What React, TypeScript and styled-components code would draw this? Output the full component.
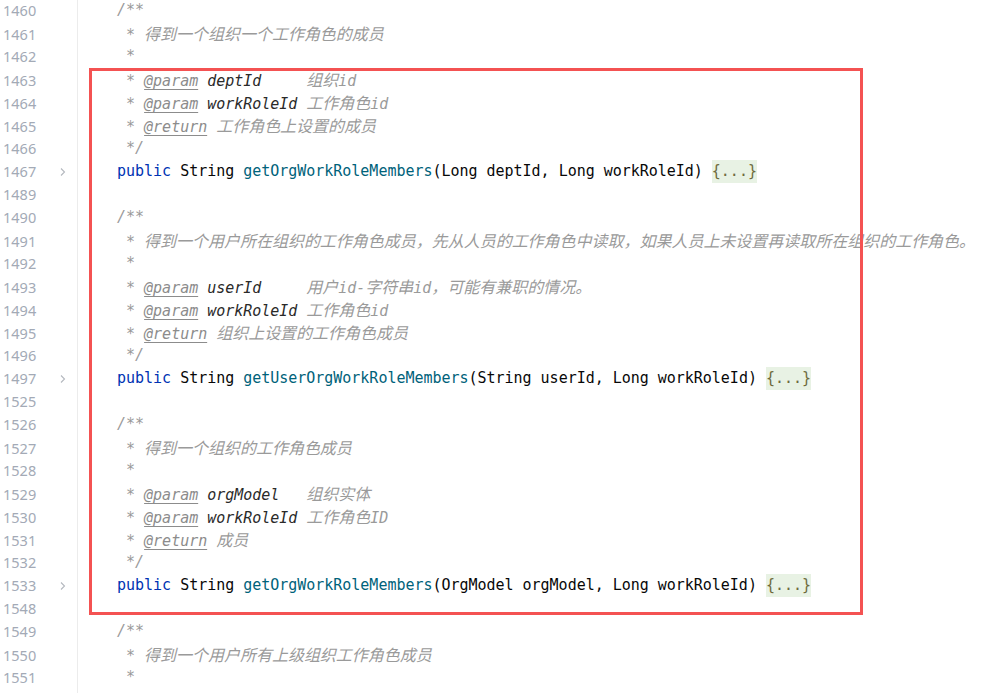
import React from "react";
import styled, { createGlobalStyle } from "styled-components";

const Global = createGlobalStyle`
  html, body { margin: 0; padding: 0; background: #ffffff; }
  body { overflow: hidden; }
`;

const Page = styled.div`
  position: relative;
  width: 989px;
  height: 693px;
  overflow: hidden;
  background: #ffffff;
`;

const Editor = styled.div`
  display: flex;
  flex-direction: column;
  margin-top: -1px;
`;

const Row = styled.div`
  display: grid;
  grid-template-columns: 78px 1fr;
  height: 23px;
`;

const Gutter = styled.div`
  display: flex;
  align-items: center;
  justify-content: space-between;
  padding: 0 10px 0 3px;
  border-right: 1px solid #ececec;
  font-family: "Noto Sans", "Open Sans", sans-serif;
  font-size: 14.5px;
  color: #a3aab6;
  line-height: 23px;
`;

const Fold = styled.svg`
  width: 8px;
  height: 10px;
  display: block;
`;

const Code = styled.div`
  padding-left: 3px;
  white-space: pre;
  font-family: "DejaVu Sans Mono", "Liberation Mono", "Noto Sans CJK SC", monospace;
  font-size: 15px;
  line-height: 23px;
  color: #080808;
  letter-spacing: -0.02px;
`;

const Comment = styled.span`
  color: #9a9a9a;
  font-style: italic;
`;

const Tag = styled.span`
  color: #8c8c8c;
  text-decoration: underline;
  text-underline-offset: 3px;
  text-decoration-color: #8c8c8c;
`;

const ParamName = styled.span`
  color: #2a2a2a;
  font-style: italic;
`;

const Cjk = styled.span`
  font-family: "Noto Sans CJK SC", sans-serif;
  font-size: 16px;
`;

const Keyword = styled.span`
  color: #0033b3;
`;

const Method = styled.span`
  color: #00627a;
`;

const Folded = styled.span`
  background: #e8f2e4;
  color: #6e6a3c;
  padding: 2px 0 3px;
`;

const Highlight = styled.div`
  position: absolute;
  left: 89px;
  top: 68px;
  width: 768px;
  height: 541px;
  border: 3px solid #f45252;
  pointer-events: none;
`;

const cjkRe = /([\u3000-\u303f\u4e00-\u9fff\uff00-\uffef]+)/;

function Text({ s }: { s: string }) {
  const parts = s.split(cjkRe);
  return (
    <>
      {parts.map((p, i) =>
        cjkRe.test(p) ? <Cjk key={i}>{p}</Cjk> : <React.Fragment key={i}>{p}</React.Fragment>
      )}
    </>
  );
}

type Line =
  | { n: number; kind: "blank" }
  | { n: number; kind: "open" }
  | { n: number; kind: "star" }
  | { n: number; kind: "close" }
  | { n: number; kind: "text"; text: string }
  | { n: number; kind: "param"; name: string; pad: string; text: string }
  | { n: number; kind: "return"; text: string }
  | { n: number; kind: "method"; name: string; args: [string, string][] };

const lines: Line[] = [
  { n: 1460, kind: "open" },
  { n: 1461, kind: "text", text: "得到一个组织一个工作角色的成员" },
  { n: 1462, kind: "star" },
  { n: 1463, kind: "param", name: "deptId", pad: "     ", text: "组织id" },
  { n: 1464, kind: "param", name: "workRoleId", pad: " ", text: "工作角色id" },
  { n: 1465, kind: "return", text: "工作角色上设置的成员" },
  { n: 1466, kind: "close" },
  { n: 1467, kind: "method", name: "getOrgWorkRoleMembers", args: [["Long", "deptId"], ["Long", "workRoleId"]] },
  { n: 1489, kind: "blank" },
  { n: 1490, kind: "open" },
  { n: 1491, kind: "text", text: "得到一个用户所在组织的工作角色成员，先从人员的工作角色中读取，如果人员上未设置再读取所在组织的工作角色。" },
  { n: 1492, kind: "star" },
  { n: 1493, kind: "param", name: "userId", pad: "     ", text: "用户id-字符串id，可能有兼职的情况。" },
  { n: 1494, kind: "param", name: "workRoleId", pad: " ", text: "工作角色id" },
  { n: 1495, kind: "return", text: "组织上设置的工作角色成员" },
  { n: 1496, kind: "close" },
  { n: 1497, kind: "method", name: "getUserOrgWorkRoleMembers", args: [["String", "userId"], ["Long", "workRoleId"]] },
  { n: 1525, kind: "blank" },
  { n: 1526, kind: "open" },
  { n: 1527, kind: "text", text: "得到一个组织的工作角色成员" },
  { n: 1528, kind: "star" },
  { n: 1529, kind: "param", name: "orgModel", pad: "   ", text: "组织实体" },
  { n: 1530, kind: "param", name: "workRoleId", pad: " ", text: "工作角色ID" },
  { n: 1531, kind: "return", text: "成员" },
  { n: 1532, kind: "close" },
  { n: 1533, kind: "method", name: "getOrgWorkRoleMembers", args: [["OrgModel", "orgModel"], ["Long", "workRoleId"]] },
  { n: 1548, kind: "blank" },
  { n: 1549, kind: "open" },
  { n: 1550, kind: "text", text: "得到一个用户所有上级组织工作角色成员" },
  { n: 1551, kind: "star" },
  { n: 1552, kind: "param", name: "userId", pad: "     ", text: "用户id-字符串id，包含所有上级的情况" },
];

function FoldIcon() {
  return (
    <Fold viewBox="0 0 8 10">
      <path d="M2 1.5 L5.5 5 L2 8.5" fill="none" stroke="#b4b8bf" strokeWidth="1.1" />
    </Fold>
  );
}

function CodeLine({ line }: { line: Line }) {
  switch (line.kind) {
    case "blank":
      return <Code> </Code>;
    case "open":
      return (
        <Code>
          {"    "}
          <Comment>/**</Comment>
        </Code>
      );
    case "star":
      return (
        <Code>
          {"     "}
          <Comment>*</Comment>
        </Code>
      );
    case "close":
      return (
        <Code>
          {"     "}
          <Comment>*/</Comment>
        </Code>
      );
    case "text":
      return (
        <Code>
          {"     "}
          <Comment>
            {"* "}
            <Text s={line.text} />
          </Comment>
        </Code>
      );
    case "param":
      return (
        <Code>
          {"     "}
          <Comment>
            {"* "}
            <Tag>@param</Tag> <ParamName>{line.name}</ParamName>
            {line.pad}
            <Text s={line.text} />
          </Comment>
        </Code>
      );
    case "return":
      return (
        <Code>
          {"     "}
          <Comment>
            {"* "}
            <Tag>@return</Tag> <Text s={line.text} />
          </Comment>
        </Code>
      );
    case "method":
      return (
        <Code>
          {"    "}
          <Keyword>public</Keyword> String <Method>{line.name}</Method>(
          {line.args.map(([t, v], i) => (
            <React.Fragment key={i}>
              {i > 0 ? ", " : ""}
              {t} {v}
            </React.Fragment>
          ))}
          ) <Folded>{"{...}"}</Folded>
        </Code>
      );
  }
}

export default function App() {
  return (
    <Page>
      <Global />
      <Editor>
        {lines.map((l) => (
          <Row key={l.n}>
            <Gutter>
              <span>{l.n}</span>
              {l.kind === "method" ? <FoldIcon /> : null}
            </Gutter>
            <CodeLine line={l} />
          </Row>
        ))}
      </Editor>
      <Highlight />
    </Page>
  );
}
